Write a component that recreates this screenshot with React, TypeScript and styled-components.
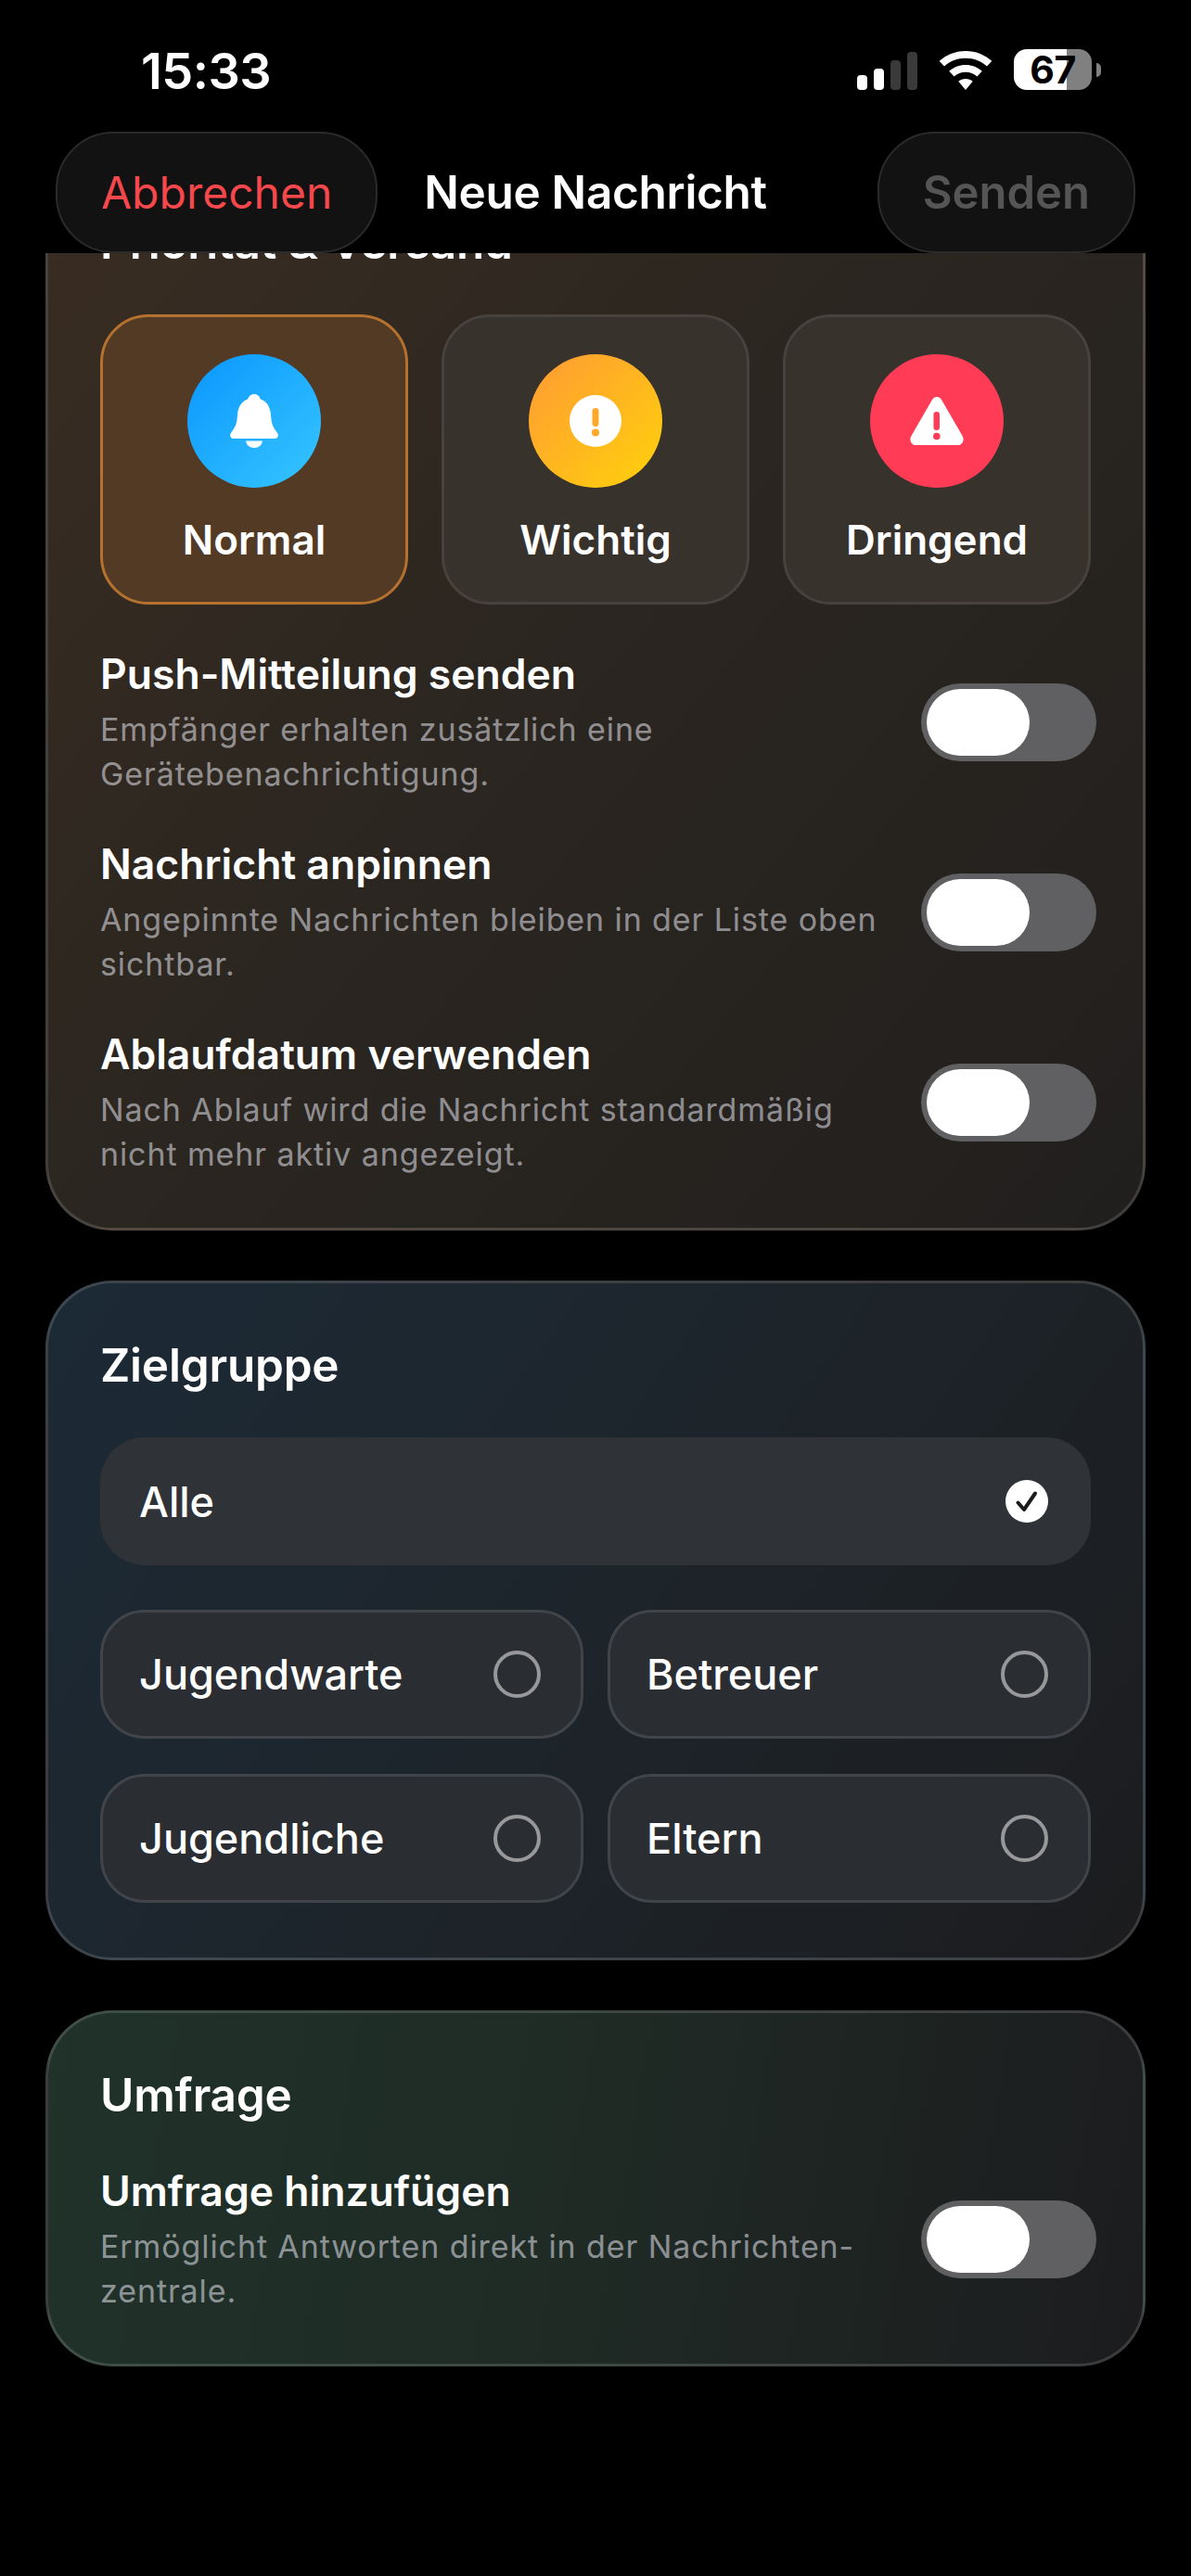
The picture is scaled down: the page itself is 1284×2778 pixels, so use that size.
import React from 'react'
import styled, { createGlobalStyle } from 'styled-components'

const GlobalStyle = createGlobalStyle`
  html, body {
    margin: 0;
    padding: 0;
    background: #000;
  }
  * {
    box-sizing: border-box;
  }
`

const Page = styled.div`
  width: 1284px;
  height: 2778px;
  background: #000;
  color: #fff;
  font-family: Inter, "Liberation Sans", sans-serif;
  display: flex;
  flex-direction: column;
  overflow: hidden;
`

const StatusBar = styled.div`
  height: 141px;
  flex: none;
  padding: 55px 107px 0 152px;
  display: flex;
  justify-content: space-between;
  align-items: flex-start;
`

const Time = styled.div`
  font-size: 54px;
  line-height: 44px;
  font-weight: 600;
  letter-spacing: -0.5px;
`

const StatusIcons = styled.div`
  display: flex;
  align-items: flex-end;
  height: 44px;
  margin-top: -2px;
`

const Battery = styled.div`
  position: relative;
  width: 84px;
  height: 44px;
  margin-left: 23px;
  border-radius: 14px;
  background: linear-gradient(90deg, #fff 0 68%, #808080 68% 100%);
  color: #000;
  font-size: 41px;
  font-weight: 700;
  line-height: 44px;
  text-align: center;
  letter-spacing: -0.5px;

  &::after {
    content: '';
    position: absolute;
    left: 89px;
    top: 15px;
    width: 5px;
    height: 15px;
    border-radius: 0 8px 8px 0;
    background: #808080;
  }
`

const NavBar = styled.div`
  height: 132px;
  flex: none;
  padding: 0 60px;
  display: grid;
  grid-template-columns: 1fr auto 1fr;
  align-items: center;
`

const NavButton = styled.div<{ $muted?: boolean; $end?: boolean }>`
  height: 131px;
  padding: 0 47px;
  justify-self: ${(p) => (p.$end ? 'end' : 'start')};
  display: flex;
  align-items: center;
  border-radius: 62px;
  background: #121212;
  border: 2px solid #2b2b2b;
  font-size: ${(p) => (p.$muted ? 49 : 48)}px;
  font-weight: ${(p) => (p.$muted ? 600 : 400)};
  color: ${(p) => (p.$muted ? '#555556' : '#f4484c')};
`

const NavTitle = styled.div`
  font-size: 49.5px;
  font-weight: 600;
  letter-spacing: -0.3px;
`

const Scroller = styled.div`
  flex: 1;
  overflow: hidden;
`

const ScrollInner = styled.div`
  margin-top: -103px;
  padding: 0 49px;
  display: flex;
  flex-direction: column;
  gap: 54px;
`

const tints = {
  brown: 'linear-gradient(130deg, #3a2d22 0%, #2b2620 45%, #211f1e 100%)',
  blue: 'linear-gradient(125deg, #1c2a36 0%, #1d252c 45%, #1c1c1e 100%)',
  green: 'linear-gradient(100deg, #20322a 0%, #1f2a25 50%, #1c1c1e 100%)',
}

const Card = styled.section<{ $tint: keyof typeof tints; $bottom: number }>`
  padding: 58px 56px ${(p) => p.$bottom}px;
  border-radius: 72px;
  border: 3px solid rgba(255, 255, 255, 0.14);
  background: ${(p) => tints[p.$tint]};
`

const CardTitle = styled.h2<{ $gap?: number }>`
  margin: 0 0 ${(p) => p.$gap ?? 48}px;
  font-size: 49.5px;
  line-height: 60px;
  font-weight: 600;
  letter-spacing: -0.2px;
`

const PriorityGrid = styled.div`
  display: grid;
  grid-template-columns: repeat(3, 1fr);
  gap: 36px;
  margin-bottom: 46px;
`

const PriorityTile = styled.div<{ $active?: boolean }>`
  height: 313px;
  padding-top: 40px;
  display: flex;
  flex-direction: column;
  align-items: center;
  border-radius: 52px;
  border: 3px solid ${(p) => (p.$active ? '#b5722f' : '#47423d')};
  background: ${(p) => (p.$active ? '#523a24' : '#38322d')};
`

const PriorityBadge = styled.div<{ $from: string; $to: string }>`
  width: 144px;
  height: 144px;
  border-radius: 50%;
  display: flex;
  align-items: center;
  justify-content: center;
  background: linear-gradient(135deg, ${(p) => p.$from}, ${(p) => p.$to});
`

const PriorityLabel = styled.div`
  margin-top: 27px;
  font-size: 44px;
  line-height: 58px;
  font-weight: 600;
`

const RowList = styled.div`
  display: flex;
  flex-direction: column;
  gap: 44px;
`

const ToggleRow = styled.div`
  display: flex;
  align-items: center;
  justify-content: space-between;
`

const RowText = styled.div`
  width: 850px;
`

const RowTitle = styled.div`
  font-size: 44.5px;
  line-height: 58px;
  font-weight: 600;
  margin-bottom: 7px;
`

const RowHint = styled.div`
  font-size: 34px;
  line-height: 48px;
  letter-spacing: 0.9px;
  color: rgba(235, 235, 245, 0.55);
`

const Toggle = styled.div`
  width: 189px;
  height: 84px;
  margin-right: -6px;
  padding: 6px 0 0 6px;
  border-radius: 42px;
  background: #606063;
`

const ToggleThumb = styled.div`
  width: 111px;
  height: 72px;
  border-radius: 36px;
  background: #fff;
`

const AudienceAll = styled.div`
  height: 138px;
  margin-bottom: 48px;
  padding: 0 46px 0 42px;
  display: flex;
  align-items: center;
  justify-content: space-between;
  border-radius: 48px;
  background: #2f3237;
`

const AudienceGrid = styled.div`
  display: grid;
  grid-template-columns: 1fr 1fr;
  gap: 38px 26px;
`

const AudienceTile = styled.div`
  height: 139px;
  padding: 0 43px 0 39px;
  display: flex;
  align-items: center;
  justify-content: space-between;
  border-radius: 48px;
  border: 3px solid #41454a;
  background: #2a2e32;
`

const AudienceLabel = styled.div`
  font-size: 45px;
  font-weight: 500;
`

const Radio = styled.div`
  width: 51px;
  height: 51px;
  border-radius: 50%;
  border: 4px solid #98989b;
`

const BellIcon = () => (
  <svg width="54" height="58" viewBox="0 0 54 58" fill="#fff">
    <path d="M27 0c3.6 0 6.2 2.6 6.8 5.6C41 8 44.5 14.5 45 22.5c.5 8.5 2 13 6.5 18.5 2.5 3 1.5 7-2.5 7H5c-4 0-5-4-2.5-7C7 35.5 8.5 31 9 22.5 9.5 14.5 13 8 20.2 5.6 20.8 2.6 23.4 0 27 0z" />
    <path d="M18 50.5h18C35.5 55 31.800 58 27 58s-8.500-3-9-7.500z" />
  </svg>
)

const AlertCircleIcon = () => (
  <svg width="56" height="56" viewBox="0 0 56 56">
    <circle cx="28" cy="28" r="28" fill="#fff" />
    <rect x="24.5" y="14" width="7" height="20" rx="3.5" fill="#ffa92a" />
    <circle cx="28" cy="40.5" r="4" fill="#ffa92a" />
  </svg>
)

const AlertTriangleIcon = () => (
  <svg width="58" height="52" viewBox="0 0 58 52">
    <path
      d="M24 3C26.3-1 31.7-1 34 3l22.8 39.5C59 46.5 56.5 52 52 52H6c-4.5 0-7-5.5-4.8-9.5L24 3z"
      fill="#fff"
    />
    <rect x="25.5" y="16" width="6.5" height="20" rx="3.2" fill="#ff3b55" />
    <circle cx="28.8" cy="42.5" r="3.8" fill="#ff3b55" />
  </svg>
)

const CheckBadge = () => (
  <svg width="46" height="46" viewBox="0 0 46 46">
    <circle cx="23" cy="23" r="23" fill="#fff" />
    <path
      d="M13.5 24.5l6.5 7.5L32 14.5"
      fill="none"
      stroke="#1c1c1e"
      strokeWidth="4"
      strokeLinecap="round"
      strokeLinejoin="round"
    />
  </svg>
)

const SignalIcon = () => (
  <svg width="65" height="41" viewBox="0 0 65 41">
    <rect x="0" y="25" width="11" height="16" rx="4" fill="#fff" />
    <rect x="18" y="18" width="11" height="23" rx="4" fill="#fff" />
    <rect x="36" y="9" width="11" height="32" rx="4" fill="#3a3a3a" />
    <rect x="54" y="0" width="11" height="41" rx="4" fill="#3a3a3a" />
  </svg>
)

const WifiIcon = () => (
  <svg width="58" height="42" viewBox="0 0 58 42" style={{ marginLeft: 23 }}>
    <path
      d="M29 0c10.8 0 20.7 4 28.3 10.8L52 16.5C45.9 11 37.8 7.7 29 7.7S12.1 11 6 16.5L.7 10.800C8.300 4 18.200 0 29 0z"
      fill="#fff"
    />
    <path
      d="M29 15c6.8 0 13 2.500 17.800 6.700l-5.400 5.700C38 24.500 33.700 22.800 29 22.800s-9 1.700-12.400 4.600l-5.400-5.700C16 17.500 22.200 15 29 15z"
      fill="#fff"
    />
    <path d="M29 30c2.900 0 5.600 1 7.700 2.800L29 42l-7.700-9.200C23.400 31 26.100 30 29 30z" fill="#fff" />
  </svg>
)

const rows = [
  {
    title: 'Push-Mitteilung senden',
    hint: 'Empfänger erhalten zusätzlich eine Gerätebenachrichtigung.',
  },
  {
    title: 'Nachricht anpinnen',
    hint: 'Angepinnte Nachrichten bleiben in der Liste oben sichtbar.',
  },
  {
    title: 'Ablaufdatum verwenden',
    hint: 'Nach Ablauf wird die Nachricht standardmäßig nicht mehr aktiv angezeigt.',
  },
]

const SwitchRow: React.FC<{ title: string; hint: string }> = ({ title, hint }) => (
  <ToggleRow>
    <RowText>
      <RowTitle>{title}</RowTitle>
      <RowHint>{hint}</RowHint>
    </RowText>
    <Toggle>
      <ToggleThumb />
    </Toggle>
  </ToggleRow>
)

export default function App() {
  return (
    <Page>
      <GlobalStyle />
      <StatusBar>
        <Time>15:33</Time>
        <StatusIcons>
          <SignalIcon />
          <WifiIcon />
          <Battery>67</Battery>
        </StatusIcons>
      </StatusBar>

      <NavBar>
        <NavButton>Abbrechen</NavButton>
        <NavTitle>Neue Nachricht</NavTitle>
        <NavButton $muted $end>
          Senden
        </NavButton>
      </NavBar>

      <Scroller>
        <ScrollInner>
          <Card $tint="brown" $bottom={55}>
            <CardTitle>Priorität &amp; Versand</CardTitle>
            <PriorityGrid>
              <PriorityTile $active>
                <PriorityBadge $from="#0a96ff" $to="#36c6ff">
                  <BellIcon />
                </PriorityBadge>
                <PriorityLabel>Normal</PriorityLabel>
              </PriorityTile>
              <PriorityTile>
                <PriorityBadge $from="#ff9a35" $to="#ffd20a">
                  <AlertCircleIcon />
                </PriorityBadge>
                <PriorityLabel>Wichtig</PriorityLabel>
              </PriorityTile>
              <PriorityTile>
                <PriorityBadge $from="#ff3b55" $to="#ff3b55">
                  <AlertTriangleIcon />
                </PriorityBadge>
                <PriorityLabel>Dringend</PriorityLabel>
              </PriorityTile>
            </PriorityGrid>
            <RowList>
              {rows.map((row) => (
                <SwitchRow key={row.title} title={row.title} hint={row.hint} />
              ))}
            </RowList>
          </Card>

          <Card $tint="blue" $bottom={59}>
            <CardTitle>Zielgruppe</CardTitle>
            <AudienceAll>
              <AudienceLabel>Alle</AudienceLabel>
              <CheckBadge />
            </AudienceAll>
            <AudienceGrid>
              {['Jugendwarte', 'Betreuer', 'Jugendliche', 'Eltern'].map((name) => (
                <AudienceTile key={name}>
                  <AudienceLabel>{name}</AudienceLabel>
                  <Radio />
                </AudienceTile>
              ))}
            </AudienceGrid>
          </Card>

          <Card $tint="green" $bottom={54}>
            <CardTitle $gap={45}>Umfrage</CardTitle>
            <SwitchRow
              title="Umfrage hinzufügen"
              hint="Ermöglicht Antworten direkt in der Nachrichten-zentrale."
            />
          </Card>
        </ScrollInner>
      </Scroller>
    </Page>
  )
}
